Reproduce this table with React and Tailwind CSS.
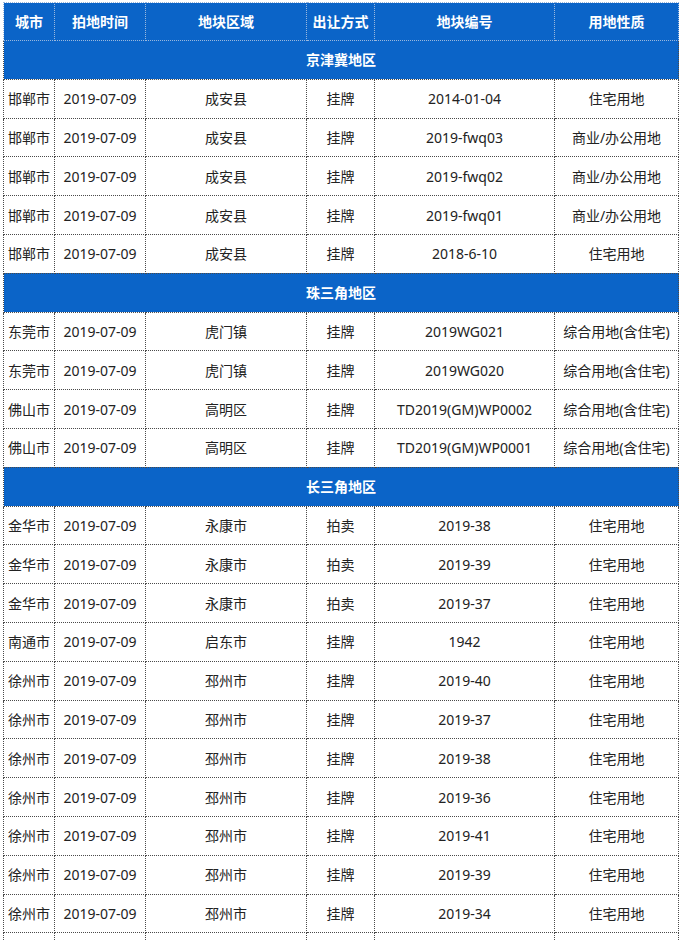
import React from 'react'

const cols = ['w-[51px]', 'w-[91px]', 'w-[161px]', 'w-[68px]', 'w-[180px]', 'w-[124px]']

const headers = ['城市', '拍地时间', '地块区域', '出让方式', '地块编号', '用地性质']

const sections = [
  {
    name: '京津冀地区',
    rows: [
      ['邯郸市', '2019-07-09', '成安县', '挂牌', '2014-01-04', '住宅用地'],
      ['邯郸市', '2019-07-09', '成安县', '挂牌', '2019-fwq03', '商业/办公用地'],
      ['邯郸市', '2019-07-09', '成安县', '挂牌', '2019-fwq02', '商业/办公用地'],
      ['邯郸市', '2019-07-09', '成安县', '挂牌', '2019-fwq01', '商业/办公用地'],
      ['邯郸市', '2019-07-09', '成安县', '挂牌', '2018-6-10', '住宅用地'],
    ],
  },
  {
    name: '珠三角地区',
    rows: [
      ['东莞市', '2019-07-09', '虎门镇', '挂牌', '2019WG021', '综合用地(含住宅)'],
      ['东莞市', '2019-07-09', '虎门镇', '挂牌', '2019WG020', '综合用地(含住宅)'],
      ['佛山市', '2019-07-09', '高明区', '挂牌', 'TD2019(GM)WP0002', '综合用地(含住宅)'],
      ['佛山市', '2019-07-09', '高明区', '挂牌', 'TD2019(GM)WP0001', '综合用地(含住宅)'],
    ],
  },
  {
    name: '长三角地区',
    rows: [
      ['金华市', '2019-07-09', '永康市', '拍卖', '2019-38', '住宅用地'],
      ['金华市', '2019-07-09', '永康市', '拍卖', '2019-39', '住宅用地'],
      ['金华市', '2019-07-09', '永康市', '拍卖', '2019-37', '住宅用地'],
      ['南通市', '2019-07-09', '启东市', '挂牌', '1942', '住宅用地'],
      ['徐州市', '2019-07-09', '邳州市', '挂牌', '2019-40', '住宅用地'],
      ['徐州市', '2019-07-09', '邳州市', '挂牌', '2019-37', '住宅用地'],
      ['徐州市', '2019-07-09', '邳州市', '挂牌', '2019-38', '住宅用地'],
      ['徐州市', '2019-07-09', '邳州市', '挂牌', '2019-36', '住宅用地'],
      ['徐州市', '2019-07-09', '邳州市', '挂牌', '2019-41', '住宅用地'],
      ['徐州市', '2019-07-09', '邳州市', '挂牌', '2019-39', '住宅用地'],
      ['徐州市', '2019-07-09', '邳州市', '挂牌', '2019-34', '住宅用地'],
    ],
  },
]

const App = () => {
  return (
    <div
      className="w-[683px] h-[940px] overflow-hidden bg-white pt-[2px] pl-[3px]"
      style={{ fontFamily: '"Noto Sans", "Noto Sans CJK SC", sans-serif' }}
    >
      <table className="border-collapse table-fixed w-[676px] text-[14px]">
        <colgroup>
          {cols.map((c, i) => (
            <col key={i} className={c} />
          ))}
        </colgroup>
        <thead>
          <tr className="bg-[#0b64c8] text-white h-[38px]">
            {headers.map((h, i) => (
              <th
                key={i}
                className="border border-dotted border-[#9bb8dd] font-bold text-center p-0 whitespace-nowrap"
              >
                {h}
              </th>
            ))}
          </tr>
        </thead>
        <tbody>
          {sections.map((s) => (
            <React.Fragment key={s.name}>
              <tr className="bg-[#0b64c8] text-white h-[38.8px]">
                <td colSpan={6} className="border border-dotted border-[#4a4a4a] font-bold text-center p-0">
                  {s.name}
                </td>
              </tr>
              {s.rows.map((r, idx) => (
                <tr key={idx} className="h-[38.8px] text-[#222]">
                  {r.map((cell, j) => (
                    <td
                      key={j}
                      className="border border-dotted border-[#4a4a4a] text-center p-0 whitespace-nowrap"
                    >
                      {cell}
                    </td>
                  ))}
                </tr>
              ))}
            </React.Fragment>
          ))}
          {/* next row, cut off by the bottom edge */}
          <tr className="h-[38.8px]">
            {cols.map((c, i) => (
              <td key={i} className="border border-dotted border-[#4a4a4a] p-0"></td>
            ))}
          </tr>
        </tbody>
      </table>
    </div>
  )
}

export default App
